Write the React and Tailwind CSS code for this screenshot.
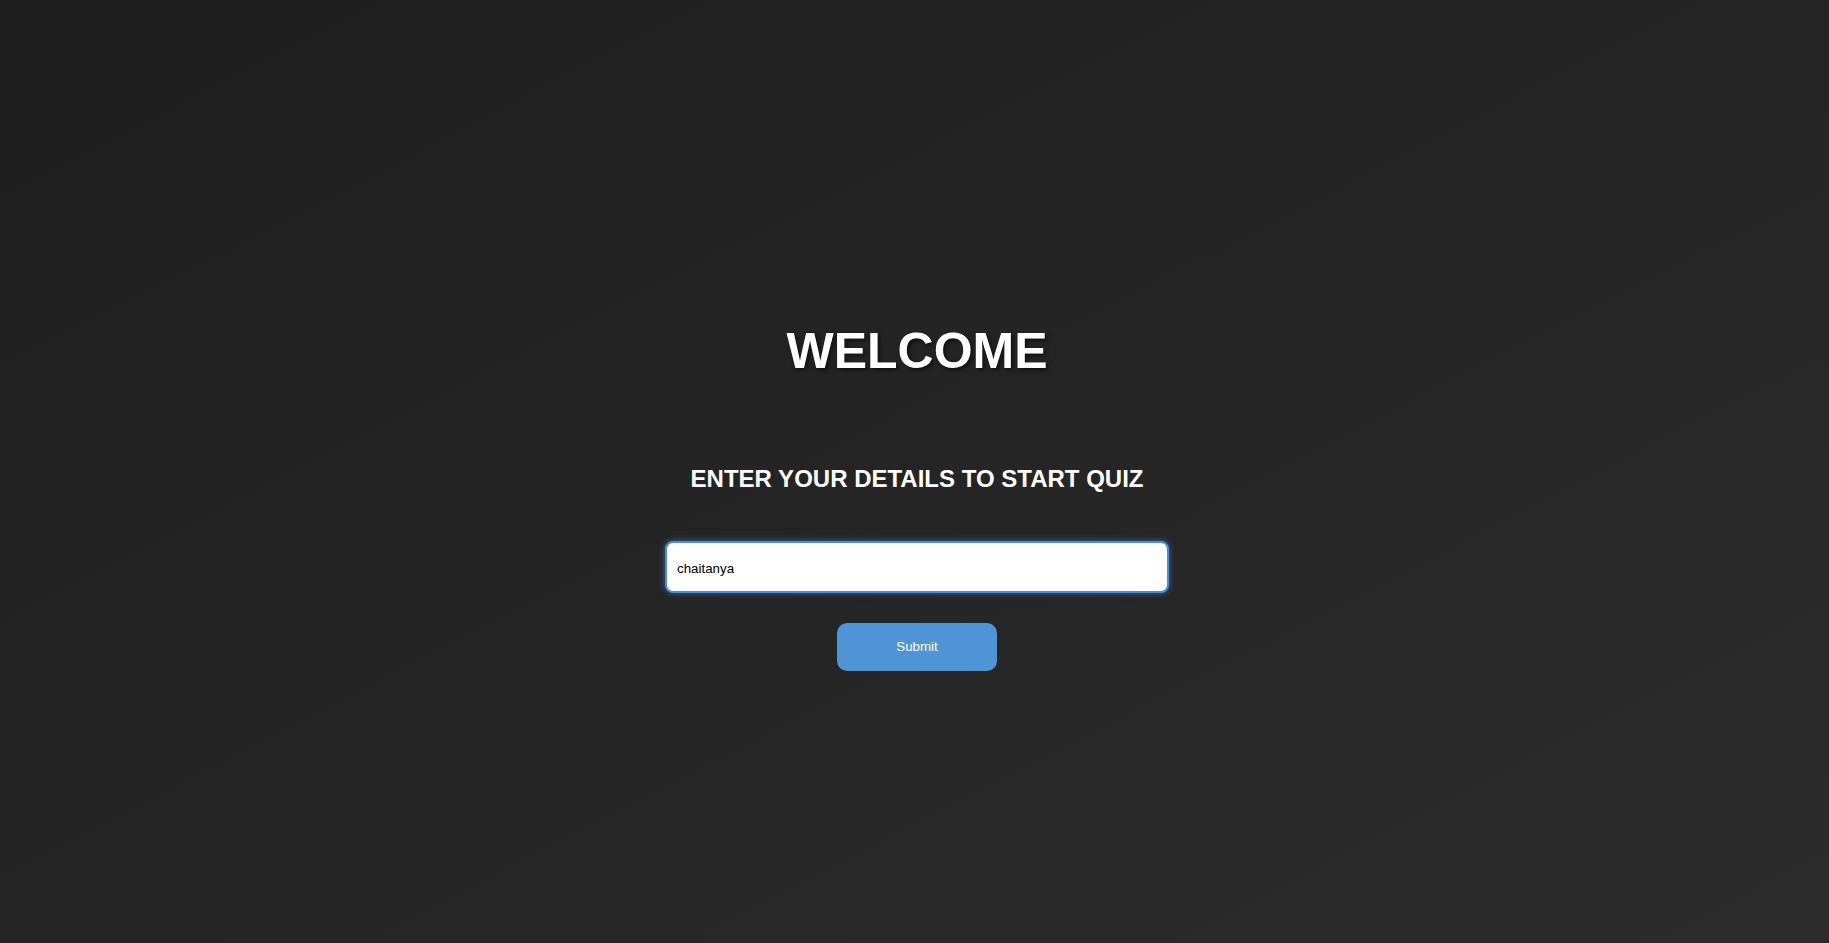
import React, { useEffect, useRef, useState } from "react";

function App() {
	const [name, setName] = useState("chaitanya");
	const inputRef = useRef(null);

	useEffect(() => {
		const el = inputRef.current;
		if (el) {
			el.focus();
			el.setSelectionRange(el.value.length, el.value.length);
		}
	}, []);

	return (
		<div
			className="min-h-screen w-full bg-linear-to-br from-[#1e1e1e] to-[#2c2c2c] text-white"
			style={{ fontFamily: '"Liberation Sans", Arial, sans-serif' }}
		>
			<div className="flex flex-col items-center pt-[322px] pl-[5px]">
				<h1 className="text-[50px] leading-[58px] font-bold text-white [text-shadow:2px_2px_4px_rgba(0,0,0,0.6)]">
					WELCOME
				</h1>

				<h2 className="mt-[85px] text-[24px] leading-[28px] font-bold text-white">
					ENTER YOUR DETAILS TO START QUIZ
				</h2>

				<input
					ref={inputRef}
					type="text"
					spellCheck
					value={name}
					onChange={(e) => setName(e.target.value)}
					className="mt-[48px] h-[52px] w-[504px] rounded-[8px] border-2 border-[#4a8fd6] bg-white pl-[10px] pr-[10px] pt-[2px] text-[13.33px] text-black caret-black outline-none shadow-[0_0_6px_rgba(74,144,226,0.6)]"
				/>

				<button
					type="button"
					className="mt-[30px] h-[48px] w-[160px] rounded-[10px] bg-[#4f94d4] text-[13.33px] text-white"
				>
					Submit
				</button>
			</div>
		</div>
	);
}

export default App;
